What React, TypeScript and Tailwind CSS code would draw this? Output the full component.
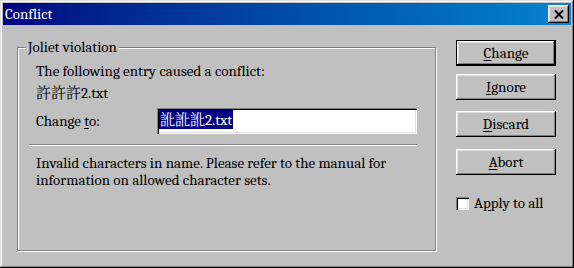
import React from "react";

const F = "font-serif";
const CJK = "font-[Noto_Serif_CJK_TC]";

function U({ c }: { c: string }) {
  return <span className={`${F} underline underline-offset-2`}>{c}</span>;
}

function Btn({ label, u, first = false, mt }: { label: string; u: number; first?: boolean; mt: string }) {
  return (
    <div className={`${mt} w-[100px] h-[26px] ${first ? "border border-black" : ""}`}>
      <div className="h-full w-full bg-[#c0c0c0] shadow-[inset_-1px_-1px_#000,inset_1px_1px_#fff,inset_-2px_-2px_#808080,inset_2px_2px_#dfdfdf] flex items-center justify-center">
        <span className={`${F} text-[15px] text-black`}>
          {label.slice(0, u)}
          <U c={label[u]} />
          {label.slice(u + 1)}
        </span>
      </div>
    </div>
  );
}

export default function App() {
  return (
    <div className="w-[574px] h-[268px] bg-[#c0c0c0] p-[3px] shadow-[inset_-1px_-1px_#000,inset_1px_1px_#dfdfdf,inset_-2px_-2px_#808080,inset_2px_2px_#fff] flex flex-col">
      <div className="h-[22px] bg-gradient-to-r from-[#000080] to-[#1084d0] flex items-center justify-between pl-[2px] pr-[2px]">
        <span className={`${F} text-white text-[15px] leading-none`}>Conflict</span>
        <div className="w-[21px] h-[18px] bg-[#c0c0c0] shadow-[inset_-1px_-1px_#000,inset_1px_1px_#fff,inset_-2px_-2px_#808080,inset_2px_2px_#dfdfdf] flex items-center justify-center">
          <svg width="10" height="9" viewBox="0 0 10 9">
            <path d="M1 0.5 L9 8.5 M9 0.5 L1 8.5" stroke="#000" strokeWidth="2" />
          </svg>
        </div>
      </div>
      <div className="flex flex-1">
        <div className="ml-[14px] mt-[22px] w-[419px] h-[204px] relative border border-[#808080] shadow-[1px_1px_0_#fff,inset_1px_1px_0_#fff] text-[15px] text-black leading-[17px]">
          <span className={`${F} absolute left-[8px] top-[-9px] bg-[#c0c0c0] px-[2px] leading-[17px]`}>Joliet violation</span>
          <div className="pl-[18px] pt-[15px]">
            <div className={F}>The following entry caused a conflict:</div>
            <div className={`${F} mt-[3px]`}>
              <span className={CJK}>許許許</span>2.txt
            </div>
            <div className="mt-[6px] flex items-center">
              <span className={`${F} w-[121px]`}>
                Change <U c="t" />o:
              </span>
              <div className="w-[260px] h-[26px] bg-white shadow-[inset_1px_1px_#808080,inset_2px_2px_#000,inset_-1px_-1px_#fff,inset_-2px_-2px_#dfdfdf] pl-[2px] pt-[2px] flex items-start">
                <span className={`${F} bg-[#000080] text-white leading-[18px] px-[1px]`}>
                  <span className={CJK}>訛訛訛</span>2.txt
                </span>
              </div>
            </div>
          </div>
          <div className="ml-[11px] mt-[10px] w-[388px] h-0 border-t border-[#808080] shadow-[0_1px_0_#fff]"></div>
          <div className="pl-[18px] pt-[10px]">
            <div className={F}>Invalid characters in name. Please refer to the manual for</div>
            <div className={F}>information on allowed character sets.</div>
          </div>
        </div>
        <div className="ml-[20px] flex flex-col">
          <Btn label="Change" u={0} first mt="mt-[15px]" />
          <Btn label="Ignore" u={0} mt="mt-[8px]" />
          <Btn label="Discard" u={0} mt="mt-[11px]" />
          <Btn label="Abort" u={0} mt="mt-[12px]" />
          <div className="mt-[17px] flex items-center text-[15px] text-black">
            <div className="w-[13px] h-[13px] bg-white shadow-[inset_1px_1px_#808080,inset_2px_2px_#000,inset_-1px_-1px_#fff,inset_-2px_-2px_#dfdfdf]"></div>
            <span className={`${F} ml-[5px]`}>
              A<U c="p" />ply to all
            </span>
          </div>
        </div>
      </div>
    </div>
  );
}
